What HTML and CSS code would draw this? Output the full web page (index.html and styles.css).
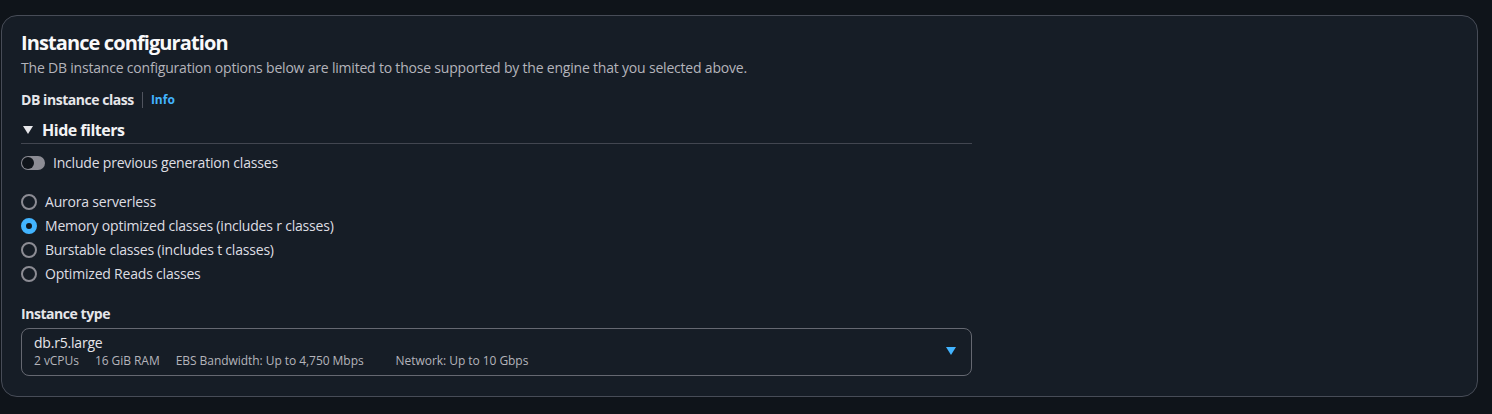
FILE: index.html
```html
<!DOCTYPE html>
<html lang="en">
<head>
    <meta charset="UTF-8">
    <meta name="viewport" content="width=device-width, initial-scale=1.0">
    <title>Instance configuration</title>
    <link rel="stylesheet" href="styles.css">
</head>
<body>
    <div class="container">
        <div class="header">
            <h2>Instance configuration</h2>
            <p class="description">The DB instance configuration options below are limited to those supported by the engine that you selected above.</p>
        </div>

        <div class="field">
            <div class="field-label">
                <span>DB instance class</span>
                <span class="label-sep"></span>
                <a class="info-link" href="#">Info</a>
            </div>

            <div class="filters">
                <div class="filters-head">
                    <span class="caret"></span>
                    <span>Hide filters</span>
                </div>
                <div class="filters-body">
                    <label class="toggle-row">
                        <span class="toggle"><span class="toggle-knob"></span></span>
                        <span>Include previous generation classes</span>
                    </label>

                    <div class="radio-group">
                        <label class="radio-row">
                            <span class="radio"></span>
                            <span>Aurora serverless</span>
                        </label>
                        <label class="radio-row">
                            <span class="radio checked"></span>
                            <span>Memory optimized classes (includes r classes)</span>
                        </label>
                        <label class="radio-row">
                            <span class="radio"></span>
                            <span>Burstable classes (includes t classes)</span>
                        </label>
                        <label class="radio-row">
                            <span class="radio"></span>
                            <span>Optimized Reads classes</span>
                        </label>
                    </div>
                </div>
            </div>
        </div>

        <div class="field instance-type">
            <div class="field-label">
                <span>Instance type</span>
            </div>
            <div class="select">
                <div class="select-value">
                    <div class="select-title">db.r5.large</div>
                    <div class="select-tags">
                        <span>2 vCPUs</span>
                        <span>16 GiB RAM</span>
                        <span>EBS Bandwidth: Up to 4,750 Mbps</span>
                        <span class="tag-spaced">Network: Up to 10 Gbps</span>
                    </div>
                </div>
                <span class="select-caret"></span>
            </div>
        </div>
    </div>
</body>
</html>
```

FILE: styles.css
```css
* {
    margin: 0;
    padding: 0;
    box-sizing: border-box;
}

body {
    font-family: 'Open Sans', 'Noto Sans', Arial, sans-serif;
    font-size: 14px;
    line-height: 20px;
    letter-spacing: -0.2px;
    color: #dedee3;
    background: #0f141a;
    padding: 15px 14px 18px 1px;
}

.container {
    background: #161d26;
    border: 1px solid #474c57;
    border-radius: 16px;
    padding: 15px 19px 20px;
}

.header h2 {
    font-size: 20px;
    line-height: 24px;
    font-weight: 700;
    letter-spacing: -0.9px;
    color: #f9f9fa;
}

.header .description {
    margin-top: 3px;
    color: #b4b4bb;
}

.field {
    margin-top: 12px;
}

.field-label {
    display: flex;
    align-items: center;
    font-weight: 700;
    letter-spacing: -0.45px;
    color: #e6e6ea;
}

.label-sep {
    width: 1px;
    height: 16px;
    background: #50545e;
    margin: 0 8px;
}

.info-link {
    font-size: 12px;
    font-weight: 700;
    letter-spacing: 0;
    color: #42b4ff;
    text-decoration: none;
}

.filters {
    max-width: 951px;
    margin-top: 10px;
}

.filters-head {
    display: flex;
    align-items: center;
    gap: 9px;
    font-size: 16px;
    font-weight: 700;
    letter-spacing: -0.5px;
    color: #f3f3f5;
    padding-bottom: 3px;
    border-bottom: 1px solid #424650;
}

.caret {
    width: 0;
    height: 0;
    margin-left: 2px;
    border-left: 5px solid transparent;
    border-right: 5px solid transparent;
    border-top: 8px solid #e6e6ea;
}

.filters-body {
    padding-top: 9px;
}

.toggle-row {
    display: flex;
    align-items: center;
    gap: 8px;
}

.toggle {
    position: relative;
    width: 24px;
    height: 14px;
    border-radius: 7px;
    background: #8c8c94;
}

.toggle-knob {
    position: absolute;
    left: 1px;
    top: 1px;
    width: 12px;
    height: 12px;
    border-radius: 50%;
    background: #0f141a;
}

.radio-group {
    display: flex;
    flex-direction: column;
    gap: 4px;
    margin-top: 19px;
}

.radio-row {
    display: flex;
    align-items: center;
    gap: 8px;
}

.radio {
    width: 16px;
    height: 16px;
    border-radius: 50%;
    border: 2px solid #8c8c94;
}

.radio.checked {
    border: 5px solid #42b4ff;
    background: #0f141a;
}

.instance-type {
    margin-top: 20px;
}

.select {
    max-width: 951px;
    margin-top: 4px;
    display: flex;
    align-items: center;
    justify-content: space-between;
    border: 1px solid #656871;
    border-radius: 8px;
    padding: 4px 15px 6px 12px;
}

.select-title {
    color: #e6e6ea;
}

.select-tags {
    display: flex;
    gap: 16px;
    font-size: 12px;
    line-height: 16px;
    letter-spacing: -0.05px;
    color: #b4b4bb;
}

.tag-spaced {
    margin-left: 16px;
}

.select-caret {
    width: 0;
    height: 0;
    border-left: 5px solid transparent;
    border-right: 5px solid transparent;
    border-top: 8px solid #42b4ff;
}
```
